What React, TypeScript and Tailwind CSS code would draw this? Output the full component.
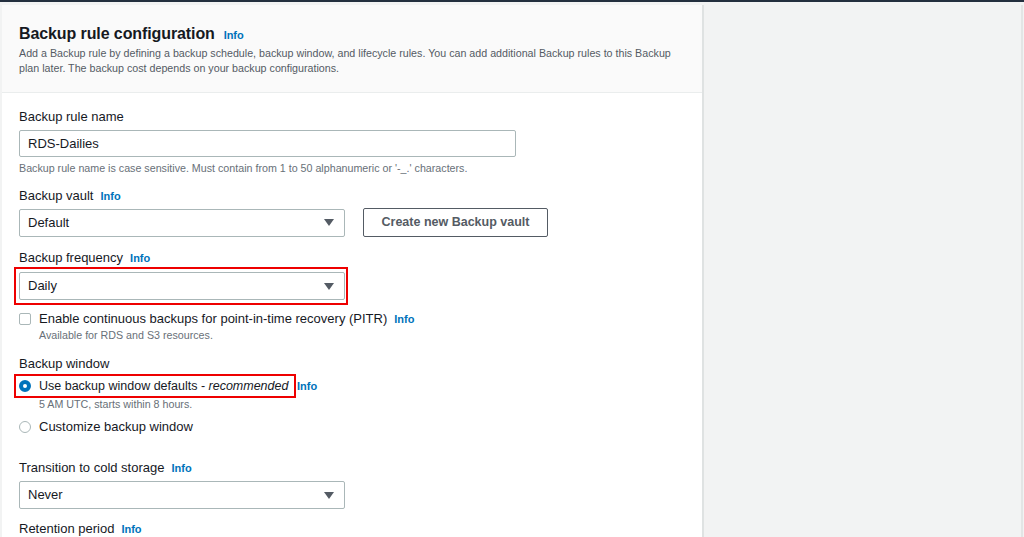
import React from 'react';

const font = { fontFamily: '"Liberation Sans", Arial, sans-serif' };

const Info = () => (
  <span className="ml-[7px] text-[11px] font-bold text-[#0073bb]">Info</span>
);

const Label = ({ text, info = true }: { text: string; info?: boolean }) => (
  <div className="flex items-baseline text-[13px] text-[#16191f] leading-[16px]">
    {text}
    {info && <Info />}
  </div>
);

const Caret = () => (
  <svg width="10" height="7" viewBox="0 0 10 7" className="shrink-0">
    <path d="M0 0 H10 L5 7 Z" fill="#545b64" />
  </svg>
);

const Select = ({ value }: { value: string }) => (
  <div className="flex items-center justify-between w-[326px] h-[28px] px-[8px] pr-[10px] border border-[#aab7b8] rounded-[2px] bg-white text-[13px] text-[#16191f]">
    <span>{value}</span>
    <Caret />
  </div>
);

const App: React.FC = () => {
  return (
    <div className="h-[537px] overflow-hidden bg-[#f2f3f3]" style={font}>
      <div className="h-[2px] bg-[#232f3e]" />
      <div className="flex pl-[2px] pt-[3px] h-full">
        <div className="w-[702px] bg-white border-r-[2px] border-[#dfe2e2] h-full">
          {/* Header */}
          <div className="bg-[#fafafa] border-b border-[#eaeded] px-[17px] pt-[19px] pb-[16px]">
            <h2 className="flex items-baseline text-[16px] font-bold text-[#16191f] leading-[20px] tracking-[-0.1px]">
              Backup rule configuration
              <span className="ml-[9px] text-[11px] font-bold text-[#0073bb]">Info</span>
            </h2>
            <p className="mt-[1px] text-[10.7px] leading-[15px] text-[#545b64] w-[664px]">
              Add a Backup rule by defining a backup schedule, backup window, and lifecycle rules. You can add additional Backup rules to this Backup plan later. The backup cost depends on your backup configurations.
            </p>
          </div>

          {/* Body */}
          <div className="px-[17px] pt-[16px]">
            <Label text="Backup rule name" info={false} />
            <div className="mt-[5px] w-[497px] h-[27px] flex items-center px-[8px] border border-[#aab7b8] rounded-[2px] text-[13px] text-[#16191f]">
              RDS-Dailies
            </div>
            <div className="mt-[4px] text-[10.7px] leading-[14px] text-[#687078]">
              Backup rule name is case sensitive. Must contain from 1 to 50 alphanumeric or '-_.' characters.
            </div>

            <div className="mt-[13px]">
              <Label text="Backup vault" />
            </div>
            <div className="mt-[4px] flex items-center gap-[18px]">
              <Select value="Default" />
              <div className="w-[185px] h-[29px] flex items-center justify-center border border-[#545b64] rounded-[2px] text-[12.5px] font-bold text-[#545b64]">
                Create new Backup vault
              </div>
            </div>

            <div className="mt-[13px]">
              <Label text="Backup frequency" />
            </div>
            <div className="mt-[1px] -ml-[5px] w-[334px] border-[2px] border-[#ee0000] px-[3px] py-[3px]">
              <Select value="Daily" />
            </div>

            <div className="mt-[6px] flex items-start">
              <div className="mt-[2px] w-[12px] h-[12px] border border-[#aab7b8] rounded-[2px] bg-white shrink-0" />
              <div className="ml-[8px]">
                <div className="flex items-baseline text-[13px] leading-[16px] text-[#16191f]">
                  Enable continuous backups for point-in-time recovery (PITR)
                  <Info />
                </div>
                <div className="mt-[1px] text-[10.7px] leading-[14px] text-[#687078]">
                  Available for RDS and S3 resources.
                </div>
              </div>
            </div>

            <div className="mt-[14px]">
              <Label text="Backup window" info={false} />
            </div>
            <div className="mt-[2px] flex items-center">
              <div className="-ml-[5px] w-[282px] border-[2px] border-[#ee0000] pl-[3px] h-[24px] flex items-center whitespace-nowrap">
                <div className="w-[12px] h-[12px] rounded-full border-[4px] border-[#0073bb] bg-white shrink-0" />
                <span className="ml-[8px] text-[12.5px] text-[#16191f] leading-[16px]">
                  Use backup window defaults - <i>recommended</i>
                </span>
              </div>
              <span className="ml-[1px] text-[11px] font-bold text-[#0073bb]">Info</span>
            </div>
            <div className="ml-[20px] -mt-[1px] text-[10.7px] leading-[14px] text-[#687078]">
              5 AM UTC, starts within 8 hours.
            </div>
            <div className="mt-[8px] flex items-center">
              <div className="w-[12px] h-[12px] rounded-full border border-[#aab7b8] bg-white shrink-0" />
              <span className="ml-[8px] text-[13px] leading-[16px] text-[#16191f]">Customize backup window</span>
            </div>

            <div className="mt-[25px]">
              <Label text="Transition to cold storage" />
            </div>
            <div className="mt-[5px]">
              <Select value="Never" />
            </div>

            <div className="mt-[12px]">
              <Label text="Retention period" />
            </div>
          </div>
        </div>
        <div className="flex-1 border-r-[2px] border-[#e3e5e5] h-full mr-[1px]" />
      </div>
    </div>
  );
};

export default App;
